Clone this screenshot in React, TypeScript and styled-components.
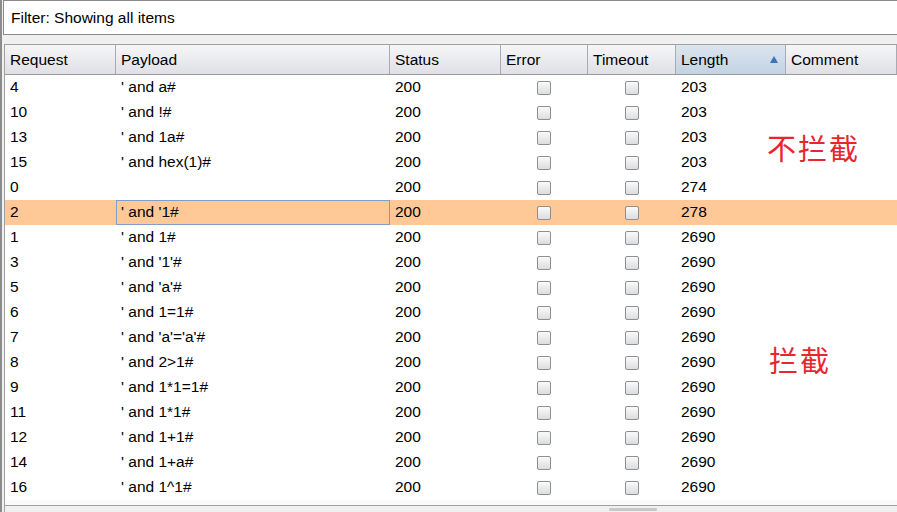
import React from 'react';
import styled, { createGlobalStyle } from 'styled-components';

type Row = {
  id: string;
  payload: string;
  status: string;
  length: string;
};

const rows: Row[] = [
  { id: '4', payload: "' and a#", status: '200', length: '203' },
  { id: '10', payload: "' and !#", status: '200', length: '203' },
  { id: '13', payload: "' and 1a#", status: '200', length: '203' },
  { id: '15', payload: "' and hex(1)#", status: '200', length: '203' },
  { id: '0', payload: '', status: '200', length: '274' },
  { id: '2', payload: "' and '1#", status: '200', length: '278' },
  { id: '1', payload: "' and 1#", status: '200', length: '2690' },
  { id: '3', payload: "' and '1'#", status: '200', length: '2690' },
  { id: '5', payload: "' and 'a'#", status: '200', length: '2690' },
  { id: '6', payload: "' and 1=1#", status: '200', length: '2690' },
  { id: '7', payload: "' and 'a'='a'#", status: '200', length: '2690' },
  { id: '8', payload: "' and 2>1#", status: '200', length: '2690' },
  { id: '9', payload: "' and 1*1=1#", status: '200', length: '2690' },
  { id: '11', payload: "' and 1*1#", status: '200', length: '2690' },
  { id: '12', payload: "' and 1+1#", status: '200', length: '2690' },
  { id: '14', payload: "' and 1+a#", status: '200', length: '2690' },
  { id: '16', payload: "' and 1^1#", status: '200', length: '2690' },
];

const SELECTED = '2';
const COLUMNS = '111px 274px 111px 87px 88px 110px 1fr';

const GlobalStyle = createGlobalStyle`
  html, body {
    margin: 0;
    padding: 0;
    background: #f0f0f0;
    font-family: "Liberation Sans", Arial, sans-serif;
    font-size: 15.5px;
    color: #000;
  }
`;

const Frame = styled.div`
  position: relative;
  width: 897px;
  height: 512px;
  overflow: hidden;
  box-sizing: border-box;
  border-left: 2px solid #8c8c8c;
  display: flex;
  flex-direction: column;
`;

const FilterBar = styled.div`
  height: 35px;
  margin-left: 1px;
  box-sizing: border-box;
  border: 1px solid #8a8a8a;
  border-right: none;
  background: #fff;
  display: flex;
  align-items: center;
  padding: 1px 0 0 7px;
`;

const TableBox = styled.div`
  margin-top: 9px;
  margin-left: 2px;
  border-top: 1px solid #a0a0a0;
  border-left: 1px solid #a0a0a0;
  background: #fff;
  flex: 1;
  display: flex;
  flex-direction: column;
`;

const HeaderRow = styled.div`
  display: grid;
  grid-template-columns: ${COLUMNS};
  height: 29px;
  border-bottom: 1px solid #9a9a9a;
`;

const HeaderCell = styled.div<{ $sorted?: boolean }>`
  display: flex;
  align-items: center;
  justify-content: space-between;
  padding: 0 6px 0 5px;
  border-right: 1px solid #a8abb2;
  background: ${({ $sorted }) =>
    $sorted
      ? 'linear-gradient(#dbe5ef, #c3d3e2)'
      : 'linear-gradient(#f6f6f8, #dfe0e5)'};
`;

const SortArrow = styled.span`
  width: 0;
  height: 0;
  border-left: 4px solid transparent;
  border-right: 4px solid transparent;
  border-bottom: 7px solid #3a73b8;
  margin-right: 1px;
`;

const DataRow = styled.div<{ $selected?: boolean }>`
  display: grid;
  grid-template-columns: ${COLUMNS};
  height: 25px;
  background: ${({ $selected }) => ($selected ? '#ffc896' : '#fff')};
`;

const Cell = styled.div<{ $focused?: boolean; $center?: boolean }>`
  display: flex;
  align-items: center;
  justify-content: ${({ $center }) => ($center ? 'center' : 'flex-start')};
  padding: 0 0 1px ${({ $center }) => ($center ? '0' : '4px')};
  box-sizing: border-box;
  border: 1px solid ${({ $focused }) => ($focused ? '#7d9fca' : 'transparent')};
  white-space: pre;
`;

const Check = styled.span`
  width: 12px;
  height: 12px;
  margin: 1px 1px 0 0;
  border: 1px solid #8e8f8f;
  border-radius: 2px;
  background: linear-gradient(#fafafa, #dcdde0);
`;

const Spacer = styled.div`
  flex: 1;
  background: #fafafa;
`;

const ScrollBar = styled.div`
  height: 6px;
  border-top: 1px solid #a0a0a0;
  background: #f0f0f0;
  display: flex;
  justify-content: flex-start;
  padding-left: 604px;
`;

const Thumb = styled.div`
  width: 48px;
  height: 3px;
  margin-top: 2px;
  background: #c8c8c8;
  border-radius: 1px;
`;

const Note = styled.div<{ $top: number; $left: number }>`
  position: absolute;
  top: ${({ $top }) => $top}px;
  left: ${({ $left }) => $left}px;
  color: #e8262d;
  font-family: "Noto Sans CJK SC", sans-serif;
  font-size: 29px;
  line-height: 32px;
  letter-spacing: 2px;
`;

const headers = ['Request', 'Payload', 'Status', 'Error', 'Timeout', 'Length', 'Comment'];

export default function App() {
  return (
    <Frame>
      <GlobalStyle />
      <FilterBar>Filter: Showing all items</FilterBar>
      <TableBox>
        <HeaderRow>
          {headers.map((h) => (
            <HeaderCell key={h} $sorted={h === 'Length'}>
              {h}
              {h === 'Length' && <SortArrow />}
            </HeaderCell>
          ))}
        </HeaderRow>
        {rows.map((r) => {
          const selected = r.id === SELECTED;
          return (
            <DataRow key={r.id} $selected={selected}>
              <Cell>{r.id}</Cell>
              <Cell $focused={selected}>{r.payload}</Cell>
              <Cell>{r.status}</Cell>
              <Cell $center>
                <Check />
              </Cell>
              <Cell $center>
                <Check />
              </Cell>
              <Cell>{r.length}</Cell>
              <Cell />
            </DataRow>
          );
        })}
        <Spacer />
        <ScrollBar>
          <Thumb />
        </ScrollBar>
      </TableBox>
      <Note $top={131} $left={765}>不拦截</Note>
      <Note $top={343} $left={767}>拦截</Note>
    </Frame>
  );
}
